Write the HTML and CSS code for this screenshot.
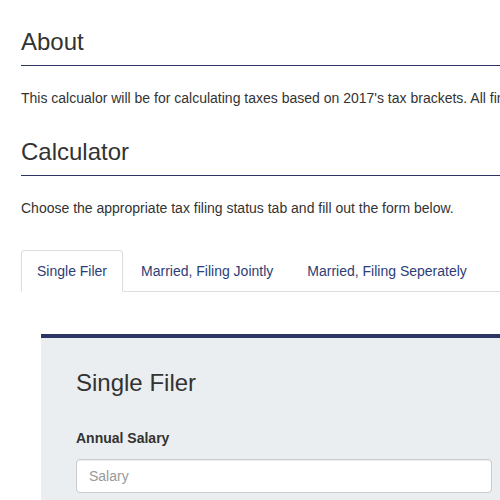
FILE: index.html
```html
<!DOCTYPE html>
<html>
<head>
<meta charset="utf-8">
<link rel="stylesheet" href="styles.css">
</head>
<body>
<div class="page">
  <h2 class="section-title first">About</h2>
  <p class="lead-text">This calcualor will be for calculating taxes based on 2017's tax brackets. All financial figures are estimates only.</p>
  <h2 class="section-title second">Calculator</h2>
  <p class="lead-text">Choose the appropriate tax filing status tab and fill out the form below.</p>
  <ul class="tabs">
    <li class="tab active"><a>Single Filer</a></li>
    <li class="tab"><a>Married, Filing Jointly</a></li>
    <li class="tab"><a>Married, Filing Seperately</a></li>
  </ul>
  <div class="card">
    <h2 class="card-title">Single Filer</h2>
    <label class="field-label">Annual Salary</label>
    <input class="field-input" type="text" placeholder="Salary">
  </div>
</div>
</body>
</html>
```
FILE: styles.css
```css
html { overflow: hidden; }
body {
  margin: 0;
  font-family: "Liberation Sans", Arial, sans-serif;
  font-size: 14px;
  line-height: 20px;
  color: #333;
  background: #fff;
}
.page {
  width: 526px;
  padding: 0 21px;
}
.section-title {
  font-size: 24px;
  line-height: 26px;
  font-weight: normal;
  margin: 32px 0 0;
  padding-bottom: 10px;
  border-bottom: 1px solid #2c3466;
}
.section-title.first { margin-top: 29px; }
.section-title.second { margin-top: 31px; }
.lead-text {
  margin: 22px 0 0;
  white-space: nowrap;
}
.tabs {
  list-style: none;
  margin: 32px 0 0;
  padding: 0;
  display: flex;
  border-bottom: 1px solid #ddd;
}
.tab { margin-bottom: -1px; }
.tab a {
  display: block;
  padding: 10px 15px;
  margin-right: 2px;
  border: 1px solid transparent;
  border-radius: 4px 4px 0 0;
  color: #2c3e76;
  cursor: pointer;
}
.tab.active a {
  background: #fff;
  border-color: #ddd #ddd transparent;
}
.card {
  margin: 42px 20px 0;
  border-top: 4px solid #2c3566;
  background: #ebeef0;
  padding: 32px 35px 30px;
}
.card-title {
  margin: 0;
  font-size: 24px;
  line-height: 26px;
  font-weight: normal;
}
.field-label {
  display: block;
  margin: 32px 0 11px;
  font-weight: bold;
}
.field-input {
  display: block;
  box-sizing: border-box;
  width: 100%;
  height: 34px;
  padding: 6px 12px;
  font-family: inherit;
  font-size: 14px;
  color: #555;
  background: #fff;
  border: 1px solid #ccc;
  border-radius: 4px;
  box-shadow: inset 0 1px 1px rgba(0,0,0,.075);
}
.field-input::placeholder { color: #999; }
```
